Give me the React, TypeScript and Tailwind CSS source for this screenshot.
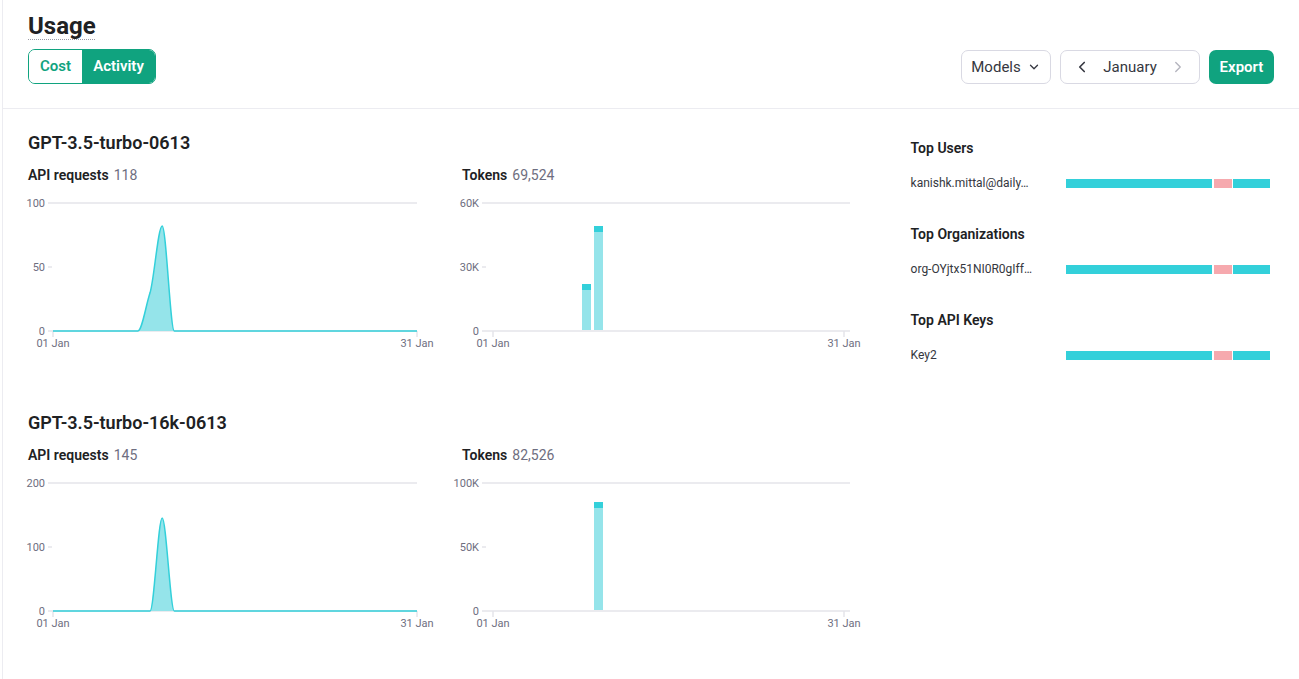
import { ChevronDown, ChevronLeft, ChevronRight } from "lucide-react";

const AXIS = "#6e6e80";
const GRID = "#e5e5ea";
const CYAN = "#33d0da";
const CYAN_LIGHT = "#95e4ea";

type AreaProps = { max: number; path: string };

const AreaChart = ({ max, path }: AreaProps) => (
  <svg width="420" height="157" className="block overflow-visible">
    <line x1="20" y1="8" x2="389" y2="8" stroke={GRID} strokeWidth="1.5" />
    <line x1="20" y1="72" x2="24" y2="72" stroke={GRID} strokeWidth="1.5" />
    <line x1="20" y1="136" x2="389" y2="136" stroke={GRID} strokeWidth="1.5" />
    <line x1="25" y1="136" x2="25" y2="142" stroke={GRID} strokeWidth="1.5" />
    <line x1="389" y1="136" x2="389" y2="142" stroke={GRID} strokeWidth="1.5" />
    <g fontSize="11" fill={AXIS} textAnchor="end">
      <text x="17" y="12">{max}</text>
      <text x="17" y="76">{max / 2}</text>
      <text x="17" y="140">0</text>
    </g>
    <path d={path + " Z"} fill={CYAN_LIGHT} stroke="none" />
    <path d={path} fill="none" stroke={CYAN} strokeWidth="1.5" />
    <g fontSize="11" fill={AXIS} textAnchor="middle">
      <text x="25" y="152">01 Jan</text>
      <text x="389" y="152">31 Jan</text>
    </g>
  </svg>
);

type Bar = { x: number; top: number };
type BarProps = { labels: string[]; bars: Bar[] };

const BarChart = ({ labels, bars }: BarProps) => (
  <svg width="420" height="157" className="block overflow-visible">
    <line x1="20" y1="8" x2="388" y2="8" stroke={GRID} strokeWidth="1.5" />
    <line x1="20" y1="72" x2="24" y2="72" stroke={GRID} strokeWidth="1.5" />
    <line x1="20" y1="136" x2="388" y2="136" stroke={GRID} strokeWidth="1.5" />
    <line x1="31" y1="136" x2="31" y2="142" stroke={GRID} strokeWidth="1.5" />
    <line x1="382" y1="136" x2="382" y2="142" stroke={GRID} strokeWidth="1.5" />
    <g fontSize="11" fill={AXIS} textAnchor="end">
      <text x="17" y="12">{labels[0]}</text>
      <text x="17" y="76">{labels[1]}</text>
      <text x="17" y="140">0</text>
    </g>
    {bars.map((b) => (
      <g key={b.x}>
        <rect x={b.x} y={b.top} width="9" height={135 - b.top} fill={CYAN_LIGHT} />
        <rect x={b.x} y={b.top} width="9" height="6" fill={CYAN} />
      </g>
    ))}
    <g fontSize="11" fill={AXIS} textAnchor="middle">
      <text x="31" y="152">01 Jan</text>
      <text x="382" y="152">31 Jan</text>
    </g>
  </svg>
);

const Stat = ({ label, value }: { label: string; value: string }) => (
  <div className="text-[14px] leading-[20px]">
    <span className="font-semibold text-[#202123]">{label}</span>
    <span className="ml-[5px] text-[#6e6e80]">{value}</span>
  </div>
);

type ModelProps = {
  name: string;
  requests: string;
  tokens: string;
  area: AreaProps;
  bars: BarProps;
};

const ModelSection = ({ name, requests, tokens, area, bars }: ModelProps) => (
  <section>
    <h2 className="text-[18px] leading-[24px] font-semibold text-[#202123]">{name}</h2>
    <div className="mt-[10px] flex gap-[14px]">
      <div className="w-[420px]">
        <Stat label="API requests" value={requests} />
        <div className="mt-[10px]">
          <AreaChart {...area} />
        </div>
      </div>
      <div className="w-[420px]">
        <Stat label="Tokens" value={tokens} />
        <div className="mt-[10px]">
          <BarChart {...bars} />
        </div>
      </div>
    </div>
  </section>
);

const TopList = ({ title, item }: { title: string; item: string }) => (
  <div>
    <h3 className="text-[14px] leading-[20px] font-semibold text-[#202123]">{title}</h3>
    <div className="mt-[15px] flex items-center">
      <span className="w-[155px] text-[12px] leading-[20px] text-[#353740]">{item}</span>
      <div className="flex h-[9px] w-[204px] gap-[1px]">
        <div className="w-[146px] bg-[#33d0da]" />
        <div className="ml-[1px] w-[18px] bg-[#f6a9ae]" />
        <div className="flex-1 bg-[#33d0da]" />
      </div>
    </div>
  </div>
);

export default function App() {
  return (
    <div
      className="ml-[2px] min-h-[679px] border-l border-[#ececf1] bg-white"
      style={{ fontFamily: "Roboto, 'Liberation Sans', sans-serif" }}
    >
      <header className="flex h-[109px] items-start justify-between border-b border-[#ececf1] px-[25px]">
        <div className="pt-[11px]">
          <h1 className="text-[24px] leading-[30px] font-bold text-[#202123] underline decoration-[#9a9aa5] decoration-dotted decoration-1 underline-offset-[5px]">
            Usage
          </h1>
          <div className="mt-[8px] flex h-[35px] overflow-hidden rounded-[7px] border border-[#10a37f] text-[15px] font-semibold">
            <button className="w-[53px] bg-white text-[#10a37f]">Cost</button>
            <button className="w-[73px] bg-[#10a37f] text-white">Activity</button>
          </div>
        </div>
        <div className="flex items-center gap-[9px] pt-[50px]">
          <button className="flex h-[34px] w-[90px] items-center justify-center gap-[6px] rounded-[7px] border border-[#d9d9e3] text-[15px] text-[#353740]">
            Models
            <ChevronDown size={14} strokeWidth={2.2} />
          </button>
          <div className="flex h-[34px] w-[140px] items-center justify-between rounded-[7px] border border-[#d9d9e3] px-[12px] text-[15px] text-[#353740]">
            <ChevronLeft size={18} strokeWidth={2.2} className="text-[#353740]" />
            <span>January</span>
            <ChevronRight size={18} strokeWidth={1.8} className="text-[#b4b4be]" />
          </div>
          <button className="h-[34px] w-[65px] rounded-[7px] bg-[#10a37f] text-[15px] font-semibold text-white">
            Export
          </button>
        </div>
      </header>

      <main className="flex px-[25px] pt-[22px]">
        <div className="flex w-[884px] flex-col gap-[59px]">
          <ModelSection
            name="GPT-3.5-turbo-0613"
            requests="118"
            tokens="69,524"
            area={{
              max: 100,
              path: "M25,136 L109.9,136 C113.9,136 117.5,112 122.1,97.6 C126.1,84 130.2,31 134.2,31 C138.2,31 142.3,136 146.3,136 L389,136",
            }}
            bars={{
              labels: ["60K", "30K"],
              bars: [
                { x: 120, top: 89 },
                { x: 132, top: 31 },
              ],
            }}
          />
          <ModelSection
            name="GPT-3.5-turbo-16k-0613"
            requests="145"
            tokens="82,526"
            area={{
              max: 200,
              path: "M25,136 L122.1,136 C126.1,136 130.2,43 134.2,43 C138.2,43 142.3,136 146.3,136 L389,136",
            }}
            bars={{
              labels: ["100K", "50K"],
              bars: [{ x: 132, top: 27 }],
            }}
          />
        </div>
        <aside className="flex w-[364px] flex-col gap-[31px] pt-[7px]">
          <TopList title="Top Users" item="kanishk.mittal@daily…" />
          <TopList title="Top Organizations" item="org-OYjtx51NI0R0gIff…" />
          <TopList title="Top API Keys" item="Key2" />
        </aside>
      </main>
    </div>
  );
}
